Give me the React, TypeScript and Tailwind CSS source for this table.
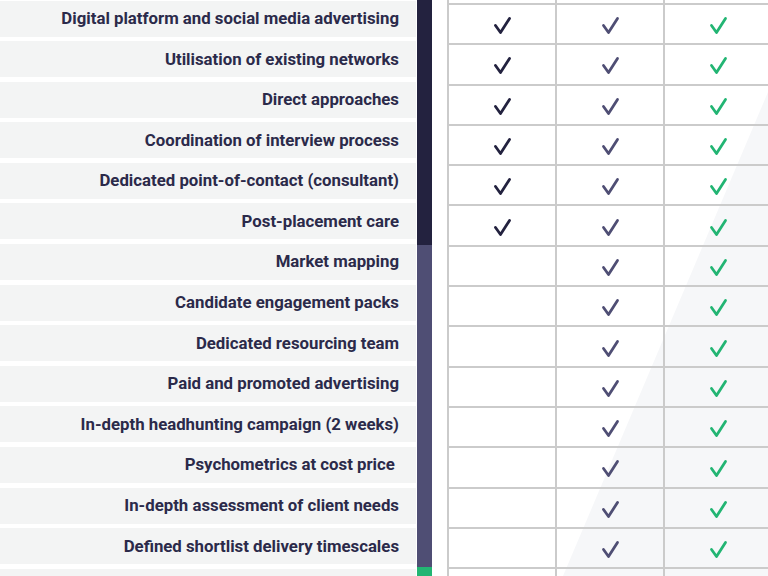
const rows = [
  { label: "Digital platform and social media advertising", basic: true },
  { label: "Utilisation of existing networks", basic: true },
  { label: "Direct approaches", basic: true },
  { label: "Coordination of interview process", basic: true },
  { label: "Dedicated point-of-contact (consultant)", basic: true },
  { label: "Post-placement care", basic: true },
  { label: "Market mapping", basic: false },
  { label: "Candidate engagement packs", basic: false },
  { label: "Dedicated resourcing team", basic: false },
  { label: "Paid and promoted advertising", basic: false },
  { label: "In-depth headhunting campaign (2 weeks)", basic: false },
  { label: "Psychometrics at cost price\u00a0", basic: false },
  { label: "In-depth assessment of client needs", basic: false },
  { label: "Defined shortlist delivery timescales", basic: false },
];

function Check({ color }: { color: string }) {
  return (
    <svg width="19" height="19" viewBox="0 0 19 19" className="mt-[3px]">
      <polyline
        points="2.5,9.5 7.5,16.5 16.5,2.5"
        fill="none"
        stroke={color}
        strokeWidth="2.8"
        strokeLinecap="round"
        strokeLinejoin="round"
      />
    </svg>
  );
}

function Cell({ children }: { children?: React.ReactNode }) {
  return (
    <div className="w-[108px] shrink-0 h-full border-l-2 border-t-2 border-[#cbcbcb] flex items-center justify-center">
      {children}
    </div>
  );
}

export default function App() {
  return (
    <div
      className="relative w-[768px] h-[576px] overflow-hidden bg-white flex"
      style={{ fontFamily: "Roboto, 'Liberation Sans', sans-serif" }}
    >
      {/* Labels */}
      <div className="w-[416px] shrink-0 flex flex-col pt-[0.5px]">
        {[...rows.map((r) => r.label), ""].map((label, i) => (
          <div
            key={i}
            className="h-[36px] mb-[4.6px] shrink-0 bg-[#f3f4f4] flex items-center justify-end pr-[17px] text-[16.8px] font-bold text-[#2b2a4a]"
          >
            {label}
          </div>
        ))}
      </div>

      {/* Colour bar */}
      <div className="w-[15px] ml-[1px] shrink-0 flex flex-col">
        <div className="h-[245px] bg-[#23223f]" />
        <div className="h-[322px] bg-[#4f4e74]" />
        <div className="flex-1 bg-[#22b573]" />
      </div>

      {/* Table */}
      <div className="relative ml-[15px] flex-1">
        <svg className="absolute inset-0" width="321" height="576" viewBox="0 0 321 576">
          <polygon points="116,576 360,0 400,0 400,576" fill="#f6f7f9" />
        </svg>
        <div className="relative flex flex-col mt-[-37.3px]">
          {[null, ...rows, null].map((r, i) => (
            <div key={i} className="h-[40.3px] shrink-0 flex">
              <Cell>{r && r.basic && <Check color="#23223f" />}</Cell>
              <Cell>{r && <Check color="#4f4e74" />}</Cell>
              <Cell>{r && <Check color="#22b573" />}</Cell>
            </div>
          ))}
        </div>
      </div>
    </div>
  );
}
